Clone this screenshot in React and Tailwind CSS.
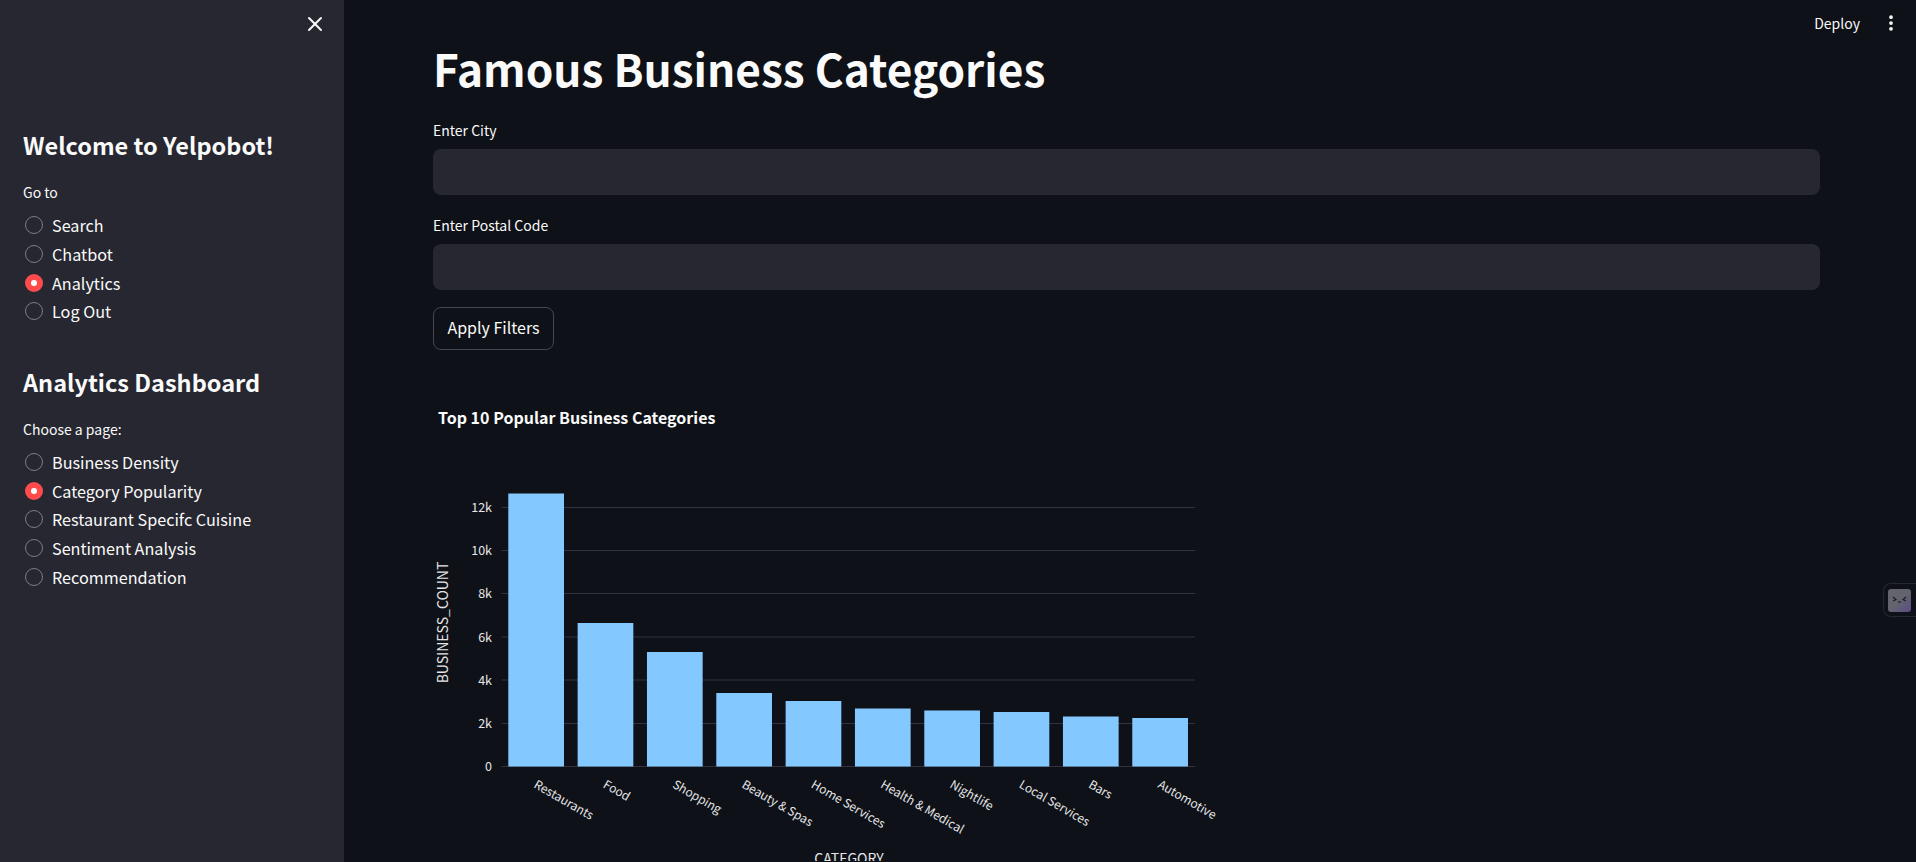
import React from 'react';
import { X, EllipsisVertical } from 'lucide-react';

const font = { fontFamily: '"Noto Sans CJK SC", "Noto Sans", sans-serif' };

const navItems = ['Search', 'Chatbot', 'Analytics', 'Log Out'];
const pageItems = ['Business Density', 'Category Popularity', 'Restaurant Specifc Cuisine', 'Sentiment Analysis', 'Recommendation'];

// chart svg sits at (433, 400) in the page, values below are relative to that
const bars = [
  { label: 'Restaurants', top: 94.5 },
  { label: 'Food', top: 224 },
  { label: 'Shopping', top: 253 },
  { label: 'Beauty & Spas', top: 294 },
  { label: 'Home Services', top: 302 },
  { label: 'Health & Medical', top: 309.5 },
  { label: 'Nightlife', top: 311.5 },
  { label: 'Local Services', top: 313 },
  { label: 'Bars', top: 317.5 },
  { label: 'Automotive', top: 319 },
];
const ticks = [
  { label: '12k', y: 108.5 },
  { label: '10k', y: 151.5 },
  { label: '8k', y: 194.5 },
  { label: '6k', y: 238 },
  { label: '4k', y: 281 },
  { label: '2k', y: 324.5 },
  { label: '0', y: 367.5 },
];

function Radio({ label, checked }) {
  return (
    <div className="flex items-center h-[28.7px]">
      {checked ? (
        <span className="ml-[25px] w-[18px] h-[18px] rounded-full bg-[#ff4b4b] flex items-center justify-center">
          <span className="w-[6px] h-[6px] rounded-full bg-white" />
        </span>
      ) : (
        <span className="ml-[25px] w-[18px] h-[18px] rounded-full border border-[#7b7d85]" />
      )}
      <span className="ml-[9px] text-[16.2px] text-[#fafafa]">{label}</span>
    </div>
  );
}

function Field({ label, className }) {
  return (
    <div className={className}>
      <div className="text-[14px] leading-[20px] text-[#fafafa]">{label}</div>
      <div className="mt-[9px] h-[45.5px] rounded-lg bg-[#262730]" />
    </div>
  );
}

function Chart() {
  return (
    <svg width="800" height="462" viewBox="0 0 800 462" className="block">
      {ticks.map((t) => (
        <g key={t.label}>
          <line x1="68.5" x2="762" y1={t.y} y2={t.y} stroke="#31333f" strokeWidth="1" />
          <text x="59" y={t.y + 4.5} textAnchor="end" fontSize="12.5" fill="#e6e6e8">{t.label}</text>
        </g>
      ))}
      {bars.map((b, i) => (
        <g key={b.label}>
          <rect x={75.3 + i * 69.33} y={b.top} width="55.7" height={367.5 - b.top} fill="#83c9ff" />
          <text
            transform={`translate(${100 + i * 69.33} 388) rotate(30)`}
            fontSize="12"
            fill="#e6e6e8"
          >
            {b.label}
          </text>
        </g>
      ))}
      <text transform="translate(15 223.5) rotate(-90)" textAnchor="middle" fontSize="14" fill="#e6e6e8">BUSINESS_COUNT</text>
      <text x="416" y="464.5" textAnchor="middle" fontSize="14" fill="#e6e6e8">CATEGORY</text>
    </svg>
  );
}

export default function App() {
  return (
    <div className="relative flex h-[862px] w-full overflow-hidden bg-[#0e1117]" style={font}>
      {/* Sidebar */}
      <aside className="w-[344px] shrink-0 bg-[#262730] text-[#fafafa]">
        <div className="flex justify-end pt-[12px] pr-[17px]">
          <X size={24} strokeWidth={2} color="#fafafa" />
        </div>
        <h2 className="mt-[89px] pl-[23px] text-[23.5px] leading-[40px] font-semibold">Welcome to Yelpobot!</h2>
        <div className="mt-[17px] pl-[23px] text-[14px] leading-[20px]">Go to</div>
        <div className="mt-[9px]">
          {navItems.map((item) => (
            <Radio key={item} label={item} checked={item === 'Analytics'} />
          ))}
        </div>
        <h2 className="mt-[36px] pl-[23px] text-[23.5px] leading-[40px] font-semibold">Analytics Dashboard</h2>
        <div className="mt-[17px] pl-[23px] text-[14px] leading-[20px]">Choose a page:</div>
        <div className="mt-[9px]">
          {pageItems.map((item) => (
            <Radio key={item} label={item} checked={item === 'Category Popularity'} />
          ))}
        </div>
      </aside>

      {/* Main */}
      <main className="flex-1 pl-[89px] pr-[96px] text-[#fafafa]">
        <h1 className="mt-[35px] text-[44.2px] leading-[66px] font-bold">Famous Business Categories</h1>
        <Field label="Enter City" className="mt-[19px]" />
        <Field label="Enter Postal Code" className="mt-[20.5px]" />
        <button className="mt-[17.5px] h-[43px] w-[121px] rounded-lg border border-[#45464f] bg-[#0e1117] pb-[3px] text-[16px] text-[#fafafa]">
          Apply Filters
        </button>
        <div className="mt-[55px] pl-[5px] text-[16px] leading-[24px] font-bold">Top 10 Popular Business Categories</div>
        <div className="-mt-[30px]">
          <Chart />
        </div>
      </main>

      {/* Top bar */}
      <div className="absolute top-[13px] right-[15px] flex items-center gap-[21px] text-[#fafafa]">
        <span className="text-[14px] leading-[20px]">Deploy</span>
        <EllipsisVertical size={20} strokeWidth={2.5} />
      </div>

      {/* Floating widget */}
      <div className="absolute right-0 top-[583px] w-[33px] h-[34px] rounded-l-lg border border-r-0 border-[#262730] flex items-center pl-[4px]">
        <div className="w-[23px] h-[23px] rounded-[3px] bg-gradient-to-br from-[#63646d] via-[#63646d] to-[#5b4a86] flex items-center justify-center">
          <svg width="15" height="10" viewBox="0 0 15 10" fill="none" stroke="#1c1d24" strokeWidth="1.2">
            <path d="M1 2l3 2.5L1 6" />
            <path d="M14 2l-3 2.5L14 6" />
            <path d="M6 7h3" />
          </svg>
        </div>
      </div>
    </div>
  );
}
